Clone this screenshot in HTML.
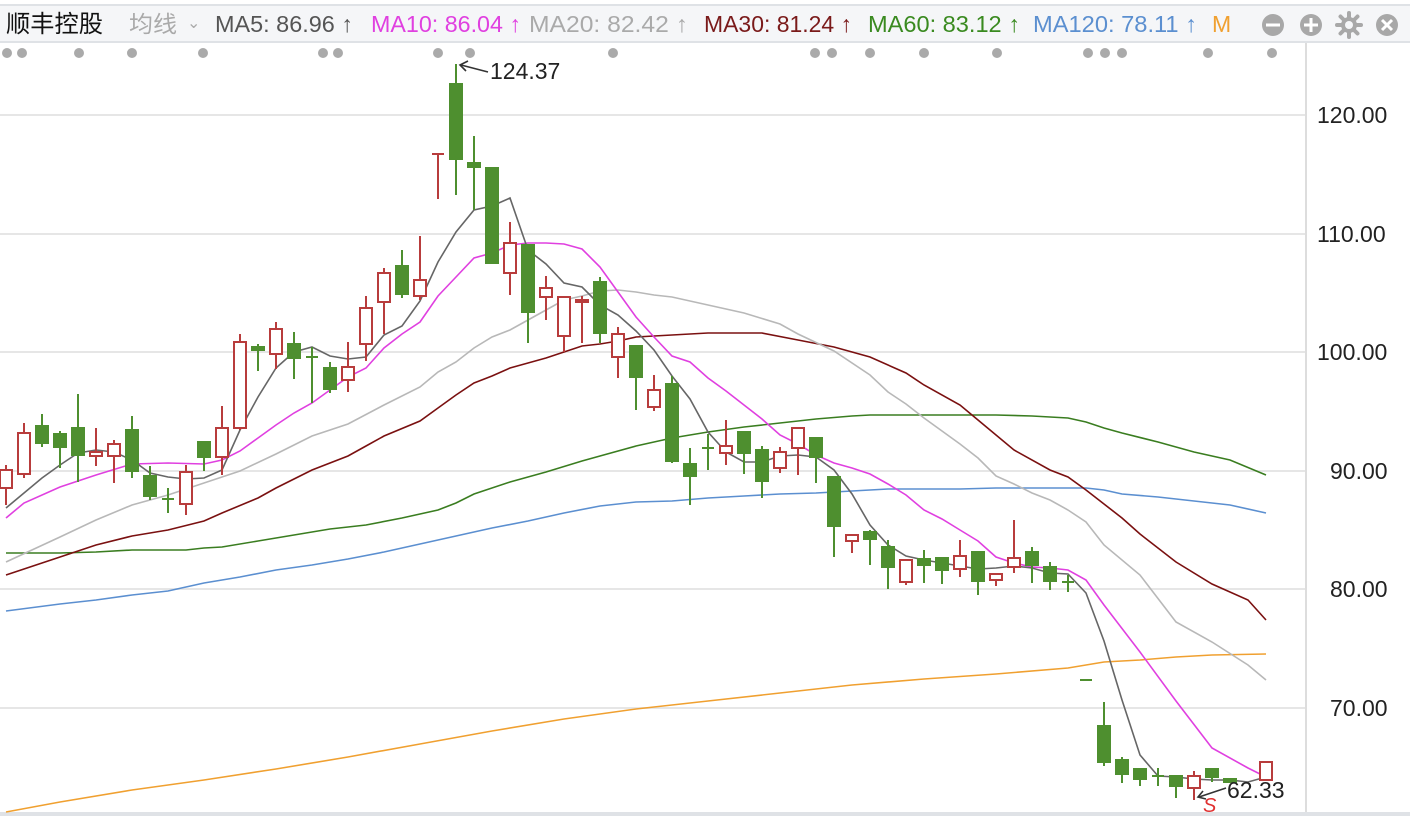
<!DOCTYPE html>
<html><head><meta charset="utf-8"><style>
body{margin:0;width:1410px;height:816px;overflow:hidden;background:#fff;font-family:"Liberation Sans","Noto Sans CJK SC",sans-serif}
svg{display:block}
</style></head><body>
<svg width="1410" height="816" viewBox="0 0 1410 816" xmlns="http://www.w3.org/2000/svg" font-family="Liberation Sans, Noto Sans CJK SC, sans-serif">
<rect x="0" y="4" width="1410" height="38" fill="#f5f6f8"/>
<line x1="0" y1="5" x2="1410" y2="5" stroke="#dfe2e6" stroke-width="2"/>
<line x1="0" y1="42" x2="1410" y2="42" stroke="#dfe2e6" stroke-width="2"/>
<g font-size="23" lengthAdjust="spacingAndGlyphs">
<text x="6" y="32" fill="#111" font-size="24" textLength="97" lengthAdjust="spacingAndGlyphs">顺丰控股</text>
<text x="129" y="32" fill="#aaa" textLength="48" lengthAdjust="spacingAndGlyphs">均线</text>
<text x="187" y="28" fill="#aaa" font-size="16">⌄</text>
<text x="215" y="32" fill="#555" textLength="138" lengthAdjust="spacingAndGlyphs">MA5: 86.96 ↑</text>
<text x="371" y="32" fill="#e040e0" textLength="150" lengthAdjust="spacingAndGlyphs">MA10: 86.04 ↑</text>
<text x="529" y="32" fill="#aaa" textLength="159" lengthAdjust="spacingAndGlyphs">MA20: 82.42 ↑</text>
<text x="704" y="32" fill="#7a1a1a" textLength="148" lengthAdjust="spacingAndGlyphs">MA30: 81.24 ↑</text>
<text x="868" y="32" fill="#3a8a20" textLength="152" lengthAdjust="spacingAndGlyphs">MA60: 83.12 ↑</text>
<text x="1033" y="32" fill="#5b8fd0" textLength="164" lengthAdjust="spacingAndGlyphs">MA120: 78.11 ↑</text>
<text x="1212" y="32" fill="#f0a030">M</text>
</g>
<g fill="#a8a8a8">
<circle cx="1273" cy="25" r="11"/><circle cx="1311" cy="25" r="11"/><circle cx="1349" cy="25" r="8"/><circle cx="1387" cy="25" r="11"/>
</g>
<g stroke="#a8a8a8" stroke-width="4" stroke-linecap="round"><line x1="1349" y1="13" x2="1349" y2="37"/><line x1="1337" y1="25" x2="1361" y2="25"/><line x1="1340.5" y1="16.5" x2="1357.5" y2="33.5"/><line x1="1357.5" y1="16.5" x2="1340.5" y2="33.5"/></g>
<circle cx="1349" cy="25" r="4" fill="#f5f6f8"/>
<g stroke="#fff" stroke-width="3"><line x1="1266" y1="25" x2="1280" y2="25"/><line x1="1304" y1="25" x2="1318" y2="25"/><line x1="1311" y1="18" x2="1311" y2="32"/><line x1="1382" y1="20" x2="1392" y2="30"/><line x1="1392" y1="20" x2="1382" y2="30"/></g>
<g fill="#aaa">
<circle cx="7" cy="53" r="5"/><circle cx="22" cy="53" r="5"/><circle cx="79" cy="53" r="5"/><circle cx="132" cy="53" r="5"/><circle cx="203" cy="53" r="5"/><circle cx="323" cy="53" r="5"/><circle cx="338" cy="53" r="5"/><circle cx="438" cy="53" r="5"/><circle cx="470" cy="53" r="5"/><circle cx="613" cy="53" r="5"/><circle cx="815" cy="53" r="5"/><circle cx="832" cy="53" r="5"/><circle cx="870" cy="53" r="5"/><circle cx="924" cy="53" r="5"/><circle cx="997" cy="53" r="5"/><circle cx="1088" cy="53" r="5"/><circle cx="1105" cy="53" r="5"/><circle cx="1122" cy="53" r="5"/><circle cx="1208" cy="53" r="5"/><circle cx="1272" cy="53" r="5"/>
</g>
<g stroke="#e6e6e6" stroke-width="2">
<line x1="0" y1="115" x2="1306" y2="115"/><line x1="0" y1="234" x2="1306" y2="234"/><line x1="0" y1="352" x2="1306" y2="352"/><line x1="0" y1="471" x2="1306" y2="471"/><line x1="0" y1="589" x2="1306" y2="589"/><line x1="0" y1="708" x2="1306" y2="708"/>
</g>
<line x1="1306" y1="43" x2="1306" y2="816" stroke="#ddd" stroke-width="2"/>
<rect x="0" y="812" width="1410" height="4" fill="#dfe2e6"/>
<g font-size="23" fill="#222">
<text x="1317" y="123">120.00</text><text x="1317" y="242">110.00</text><text x="1317" y="360">100.00</text><text x="1330" y="479">90.00</text><text x="1330" y="597">80.00</text><text x="1330" y="716">70.00</text>
</g>
<g fill="none" stroke-width="1.6">
<polyline stroke="#f0a030" points="6,812 60,802 132,790 204,780 276,769 348,757 420,744 492,731 564,719 636,709 708,701 780,693 852,685 924,679 996,674 1068,668 1104,662 1140,660 1176,657 1212,655 1266,654"/>
<polyline stroke="#5b8fd0" points="6,611 60,604 96,600 132,595 168,591 204,583 240,577 276,570 312,565 348,559 384,552 420,544 456,536 492,528 528,521 564,513 600,506 636,502 672,501 708,498 744,496 780,494 816,493 852,491 888,489 924,489 960,489 996,488 1032,488 1086,488 1104,490 1122,494 1158,497 1194,501 1230,505 1266,513"/>
<polyline stroke="#3a7d20" points="6,553 60,553 96,552 132,550 186,550 204,548 222,547 258,541 294,535 330,529 366,525 402,518 438,510 456,503 474,494 510,482 546,472 582,461 600,456 636,446 672,438 708,432 744,427 780,423 816,419 852,416 870,415 960,415 996,415 1032,416 1068,418 1086,422 1104,428 1122,433 1158,442 1194,452 1230,460 1266,475"/>
<polyline stroke="#7a1010" points="6,575 42,563 96,545 132,536 168,530 204,521 222,513 258,498 276,488 312,470 348,456 366,446 384,436 420,421 438,408 456,395 474,383 492,376 510,368 528,363 546,358 564,352 582,346 600,344 618,341 636,337 672,335 708,333 762,333 798,340 834,347 870,357 906,373 924,385 960,405 978,420 1014,450 1050,470 1068,477 1086,490 1104,504 1122,518 1140,534 1176,562 1212,584 1248,600 1266,620"/>
<polyline stroke="#b8b8b8" points="6,562 60,537 96,520 132,505 168,495 204,483 222,477 240,471 276,454 312,436 348,424 384,405 420,387 438,372 456,362 474,348 492,337 510,330 528,320 546,310 564,300 582,296 600,291 618,290 636,292 654,295 672,297 708,305 744,313 780,324 798,334 834,351 870,375 888,392 906,404 924,418 960,444 978,458 996,476 1014,484 1032,493 1050,500 1068,510 1086,522 1104,545 1140,575 1176,622 1212,642 1248,665 1266,680"/>
<polyline stroke="#e040e0" points="6,518 24,503 60,487 96,475 132,464 168,463 204,464 222,460 240,451 258,438 276,425 294,413 312,403 330,390 348,377 366,368 384,348 402,334 420,322 438,296 456,277 474,258 492,253 510,245 528,243 546,243 564,244 582,249 600,267 618,292 636,317 654,337 672,356 690,362 708,378 726,391 744,405 762,419 780,435 798,444 816,455 834,463 852,468 870,474 888,484 906,495 924,510 942,519 960,530 978,541 996,557 1014,563 1032,567 1050,568 1068,570 1086,580 1104,605 1140,652 1176,701 1212,748 1248,768 1266,777"/>
<polyline stroke="#666" points="6,508 42,478 60,465 78,453 96,450 114,452 132,460 150,473 168,477 186,479 204,478 222,470 240,430 258,397 276,368 294,352 312,347 330,356 348,359 366,357 384,335 402,326 420,301 438,262 456,232 474,210 492,206 510,198 528,250 546,264 564,283 582,287 600,305 618,315 636,331 654,350 672,376 690,399 708,432 726,452 744,462 762,462 780,456 798,455 816,457 834,470 852,494 870,525 888,545 906,556 924,560 942,563 960,566 978,569 996,568 1014,566 1032,568 1050,573 1068,574 1086,593 1104,641 1122,700 1140,755 1158,776 1176,777 1194,779 1212,780 1230,780 1248,782 1266,777"/>
</g>
<g stroke="#b83c3c" stroke-width="2" fill="#fff">
<line x1="6" y1="465" x2="6" y2="505"/><rect x="0" y="470" width="12" height="18"/>
<line x1="24" y1="423" x2="24" y2="478"/><rect x="18" y="433" width="12" height="41"/>
<line x1="96" y1="428" x2="96" y2="466"/><rect x="90" y="452" width="12" height="4"/>
<line x1="114" y1="440" x2="114" y2="483"/><rect x="108" y="444" width="12" height="12"/>
<line x1="186" y1="465" x2="186" y2="515"/><rect x="180" y="472" width="12" height="32"/>
<line x1="222" y1="406" x2="222" y2="475"/><rect x="216" y="428" width="12" height="29"/>
<line x1="240" y1="334" x2="240" y2="430"/><rect x="234" y="342" width="12" height="86"/>
<line x1="276" y1="322" x2="276" y2="369"/><rect x="270" y="329" width="12" height="25"/>
<line x1="348" y1="342" x2="348" y2="392"/><rect x="342" y="367" width="12" height="13"/>
<line x1="366" y1="296" x2="366" y2="361"/><rect x="360" y="308" width="12" height="36"/>
<line x1="384" y1="268" x2="384" y2="334"/><rect x="378" y="273" width="12" height="29"/>
<line x1="420" y1="236" x2="420" y2="300"/><rect x="414" y="280" width="12" height="16"/>
<line x1="438" y1="153" x2="438" y2="199"/><line x1="432" y1="154" x2="444" y2="154"/>
<line x1="510" y1="222" x2="510" y2="295"/><rect x="504" y="243" width="12" height="30"/>
<line x1="546" y1="276" x2="546" y2="320"/><rect x="540" y="288" width="12" height="9"/>
<line x1="564" y1="297" x2="564" y2="352"/><rect x="558" y="297" width="12" height="39"/>
<line x1="582" y1="296" x2="582" y2="343"/><rect x="576" y="300" width="12" height="2" fill="#b83c3c"/>
<line x1="618" y1="327" x2="618" y2="378"/><rect x="612" y="334" width="12" height="23"/>
<line x1="654" y1="375" x2="654" y2="411"/><rect x="648" y="390" width="12" height="17"/>
<line x1="726" y1="420" x2="726" y2="465"/><rect x="720" y="446" width="12" height="7"/>
<line x1="780" y1="447" x2="780" y2="473"/><rect x="774" y="452" width="12" height="16"/>
<line x1="798" y1="428" x2="798" y2="475"/><rect x="792" y="428" width="12" height="20"/>
<line x1="852" y1="535" x2="852" y2="553"/><rect x="846" y="535" width="12" height="6"/>
<line x1="906" y1="560" x2="906" y2="585"/><rect x="900" y="560" width="12" height="22"/>
<line x1="960" y1="540" x2="960" y2="577"/><rect x="954" y="556" width="12" height="13"/>
<line x1="996" y1="574" x2="996" y2="586"/><rect x="990" y="574" width="12" height="6"/>
<line x1="1014" y1="520" x2="1014" y2="573"/><rect x="1008" y="558" width="12" height="9"/>
<line x1="1194" y1="771" x2="1194" y2="800"/><rect x="1188" y="776" width="12" height="12"/>
<rect x="1260" y="762" width="12" height="18"/>
</g>
<g stroke="#4e8f2f" stroke-width="2" fill="#4e8f2f">
<line x1="42" y1="414" x2="42" y2="447"/><rect x="36" y="426" width="12" height="17"/>
<line x1="60" y1="431" x2="60" y2="468"/><rect x="54" y="434" width="12" height="13"/>
<line x1="78" y1="394" x2="78" y2="482"/><rect x="72" y="428" width="12" height="27"/>
<line x1="132" y1="416" x2="132" y2="478"/><rect x="126" y="430" width="12" height="41"/>
<line x1="150" y1="466" x2="150" y2="500"/><rect x="144" y="476" width="12" height="20"/>
<line x1="168" y1="488" x2="168" y2="513"/><line x1="162" y1="499" x2="174" y2="499"/>
<line x1="204" y1="442" x2="204" y2="471"/><rect x="198" y="442" width="12" height="15"/>
<line x1="258" y1="344" x2="258" y2="371"/><rect x="252" y="347" width="12" height="3"/>
<line x1="294" y1="332" x2="294" y2="379"/><rect x="288" y="344" width="12" height="14"/>
<line x1="312" y1="347" x2="312" y2="403"/><line x1="306" y1="357" x2="318" y2="357"/>
<line x1="330" y1="362" x2="330" y2="393"/><rect x="324" y="368" width="12" height="21"/>
<line x1="402" y1="250" x2="402" y2="298"/><rect x="396" y="266" width="12" height="28"/>
<line x1="456" y1="64" x2="456" y2="195"/><rect x="450" y="84" width="12" height="75"/>
<line x1="474" y1="136" x2="474" y2="210"/><rect x="468" y="163" width="12" height="4"/>
<rect x="486" y="168" width="12" height="95"/>
<line x1="528" y1="244" x2="528" y2="343"/><rect x="522" y="245" width="12" height="67"/>
<line x1="600" y1="277" x2="600" y2="343"/><rect x="594" y="282" width="12" height="51"/>
<line x1="636" y1="345" x2="636" y2="410"/><rect x="630" y="346" width="12" height="31"/>
<line x1="672" y1="376" x2="672" y2="463"/><rect x="666" y="384" width="12" height="77"/>
<line x1="690" y1="448" x2="690" y2="505"/><rect x="684" y="464" width="12" height="12"/>
<line x1="708" y1="434" x2="708" y2="470"/><line x1="702" y1="448" x2="714" y2="448"/>
<line x1="744" y1="432" x2="744" y2="474"/><rect x="738" y="432" width="12" height="21"/>
<line x1="762" y1="446" x2="762" y2="498"/><rect x="756" y="450" width="12" height="31"/>
<line x1="816" y1="437" x2="816" y2="483"/><rect x="810" y="438" width="12" height="19"/>
<line x1="834" y1="477" x2="834" y2="557"/><rect x="828" y="477" width="12" height="49"/>
<line x1="870" y1="530" x2="870" y2="565"/><rect x="864" y="532" width="12" height="7"/>
<line x1="888" y1="540" x2="888" y2="589"/><rect x="882" y="547" width="12" height="20"/>
<line x1="924" y1="550" x2="924" y2="583"/><rect x="918" y="559" width="12" height="6"/>
<line x1="942" y1="558" x2="942" y2="584"/><rect x="936" y="558" width="12" height="12"/>
<line x1="978" y1="552" x2="978" y2="595"/><rect x="972" y="552" width="12" height="29"/>
<line x1="1032" y1="547" x2="1032" y2="583"/><rect x="1026" y="552" width="12" height="13"/>
<line x1="1050" y1="562" x2="1050" y2="590"/><rect x="1044" y="567" width="12" height="14"/>
<line x1="1068" y1="575" x2="1068" y2="592"/><line x1="1062" y1="582" x2="1074" y2="582"/>
<line x1="1080" y1="680" x2="1092" y2="680"/>
<line x1="1104" y1="702" x2="1104" y2="766"/><rect x="1098" y="726" width="12" height="36"/>
<line x1="1122" y1="757" x2="1122" y2="783"/><rect x="1116" y="760" width="12" height="14"/>
<line x1="1140" y1="768" x2="1140" y2="786"/><rect x="1134" y="769" width="12" height="10"/>
<line x1="1158" y1="768" x2="1158" y2="786"/><line x1="1152" y1="776" x2="1164" y2="776"/>
<line x1="1176" y1="776" x2="1176" y2="798"/><rect x="1170" y="776" width="12" height="10"/>
<line x1="1212" y1="769" x2="1212" y2="782"/><rect x="1206" y="769" width="12" height="8"/>
<rect x="1224" y="779" width="12" height="3"/>
</g>
<g stroke="#333" stroke-width="1.6" fill="none">
<line x1="461" y1="65" x2="488" y2="72"/><polyline points="468,61 460,65 466,71"/>
<line x1="1199" y1="797" x2="1226" y2="788"/><polyline points="1203,791 1198,797 1206,799"/>
</g>
<text x="490" y="79" font-size="23" fill="#222">124.37</text>
<text x="1227" y="798" font-size="23" fill="#222">62.33</text>
<text x="1203" y="812" font-size="20" fill="#e03030" font-style="italic">S</text>
</svg>
</body></html>
